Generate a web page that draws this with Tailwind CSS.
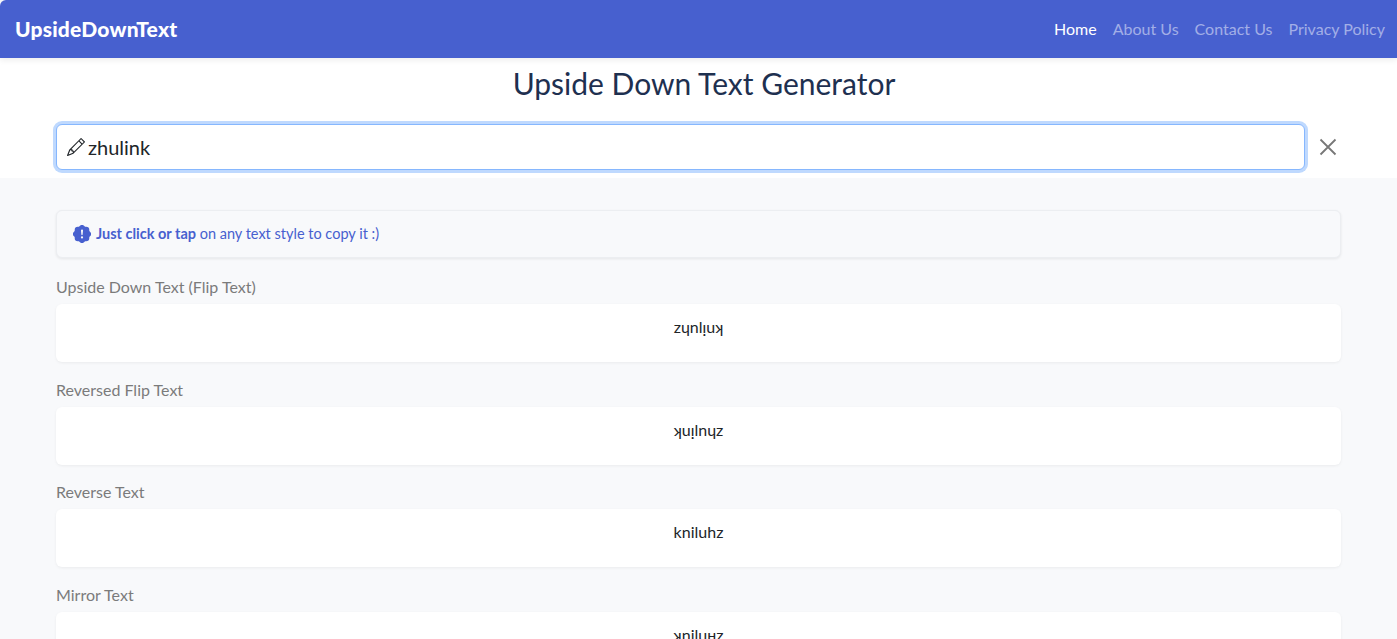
<!DOCTYPE html>
<html lang="en">
<head>
  <meta charset="UTF-8" />
  <title>Upside Down Text Generator</title>
  <script src="https://cdn.jsdelivr.net/npm/@tailwindcss/browser@4"></script>
</head>
<body class="bg-[#f8f9fb] font-['Open_Sans',sans-serif] text-[#212529] overflow-hidden h-[639px]">

  <!-- Navbar -->
  <nav class="relative z-10 bg-[#4760cf] h-[58px] flex items-center justify-between pl-[15px] pr-3 rounded-tl-md shadow-[0_2px_6px_rgba(0,0,0,0.08)]">
    <a href="#" class="font-['Lato',sans-serif] font-black text-[21px] text-white tracking-[0.2px]">UpsideDownText</a>
    <div class="flex gap-4 text-[16px] font-['Lato',sans-serif]">
      <a href="#" class="text-white">Home</a>
      <a href="#" class="text-white/50">About Us</a>
      <a href="#" class="text-white/50">Contact Us</a>
      <a href="#" class="text-white/50">Privacy Policy</a>
    </div>
  </nav>

  <!-- Generator -->
  <section class="bg-white h-[120px] pl-14 pr-[45px]">
    <h1 class="font-['Lato',sans-serif] text-[30px] leading-[50px] text-[#1e3050] text-center pr-0 ml-0 mr-[0px] w-[1296px]">Upside Down Text Generator</h1>
    <div class="flex items-center mt-4">
      <div class="flex-none w-[1249px] h-[46px] flex items-center gap-[3px] pl-[10px] bg-white border border-[#86b7fe] rounded-md ring-3 ring-[#bfd9fe]">
        <svg class="size-[18px] text-[#212529]" viewBox="0 0 16 16" fill="currentColor"><path d="M12.146.146a.5.5 0 0 1 .708 0l3 3a.5.5 0 0 1 0 .708l-10 10a.5.5 0 0 1-.168.11l-5 2a.5.5 0 0 1-.65-.65l2-5a.5.5 0 0 1 .11-.168l10-10zM11.207 2.5 13.5 4.793 14.793 3.5 12.5 1.207 11.207 2.5zm1.586 3L10.5 3.207 4 9.707V10h.5a.5.5 0 0 1 .5.5v.5h.5a.5.5 0 0 1 .5.5v.5h.293l6.5-6.5zm-9.761 5.175-.106.106-1.528 3.821 3.821-1.528.106-.106A.5.5 0 0 1 5 12.5V12h-.5a.5.5 0 0 1-.5-.5V11h-.5a.5.5 0 0 1-.468-.325z"/></svg>
        <span class="text-[20px] font-['Lato',sans-serif]">zhulink</span>
      </div>
      <svg class="ml-[14px] size-[18px] text-[#777]" viewBox="0 0 18 18" fill="none" stroke="currentColor" stroke-width="1.8"><path d="M1.5 1.5l15 15M16.5 1.5l-15 15"/></svg>
    </div>
  </section>

  <!-- Results -->
  <main class="px-14 pt-8">
    <div class="h-12 flex items-center gap-[5px] pl-4 bg-[#f8f9fb] border border-[#eceef1] rounded-md shadow-[0_1px_3px_rgba(0,0,0,0.08)] text-[#4760cf] text-[14.5px] font-['Lato',sans-serif]">
      <svg class="size-[18px]" viewBox="0 0 16 16" fill="currentColor"><path d="M10.067.87a2.89 2.89 0 0 0-4.134 0l-.622.638-.89-.011a2.89 2.89 0 0 0-2.924 2.924l.01.89-.636.622a2.89 2.89 0 0 0 0 4.134l.637.622-.011.89a2.89 2.89 0 0 0 2.924 2.924l.89-.01.622.636a2.89 2.89 0 0 0 4.134 0l.622-.637.89.011a2.89 2.89 0 0 0 2.924-2.924l-.01-.89.636-.622a2.89 2.89 0 0 0 0-4.134l-.637-.622.011-.89a2.89 2.89 0 0 0-2.924-2.924l-.89.01-.622-.636zM8 4c.535 0 .954.462.9.995l-.35 3.507a.552.552 0 0 1-1.1 0L7.1 4.995A.905.905 0 0 1 8 4zm.002 6a1 1 0 1 1 0 2 1 1 0 0 1 0-2z"/></svg>
      <p><b class="font-bold">Just click or tap</b> on any text style to copy it :)</p>
    </div>

    <div class="mt-[17px] flex flex-col gap-[15.7px] font-['Lato',sans-serif]">
      <div>
        <label class="block text-[16px] leading-6 text-[#7b7b7b] mb-[5px]">Upside Down Text (Flip Text)</label>
        <div class="h-[58px] pt-[11px] bg-white rounded-md shadow-[0_1px_3px_rgba(0,0,0,0.06)] text-center text-[16px] leading-6">zɥnlᴉuʞ</div>
      </div>
      <div>
        <label class="block text-[16px] leading-6 text-[#7b7b7b] mb-[5px]">Reversed Flip Text</label>
        <div class="h-[58px] pt-[11px] bg-white rounded-md shadow-[0_1px_3px_rgba(0,0,0,0.06)] text-center text-[16px] leading-6">ʞuᴉlnɥz</div>
      </div>
      <div>
        <label class="block text-[16px] leading-6 text-[#7b7b7b] mb-[5px]">Reverse Text</label>
        <div class="h-[58px] pt-[11px] bg-white rounded-md shadow-[0_1px_3px_rgba(0,0,0,0.06)] text-center text-[16px] leading-6">kniluhz</div>
      </div>
      <div>
        <label class="block text-[16px] leading-6 text-[#7b7b7b] mb-[5px]">Mirror Text</label>
        <div class="h-[58px] pt-[11px] bg-white rounded-md shadow-[0_1px_3px_rgba(0,0,0,0.06)] text-center text-[16px] leading-6">ʞniluʜz</div>
      </div>
    </div>
  </main>

</body>
</html>
